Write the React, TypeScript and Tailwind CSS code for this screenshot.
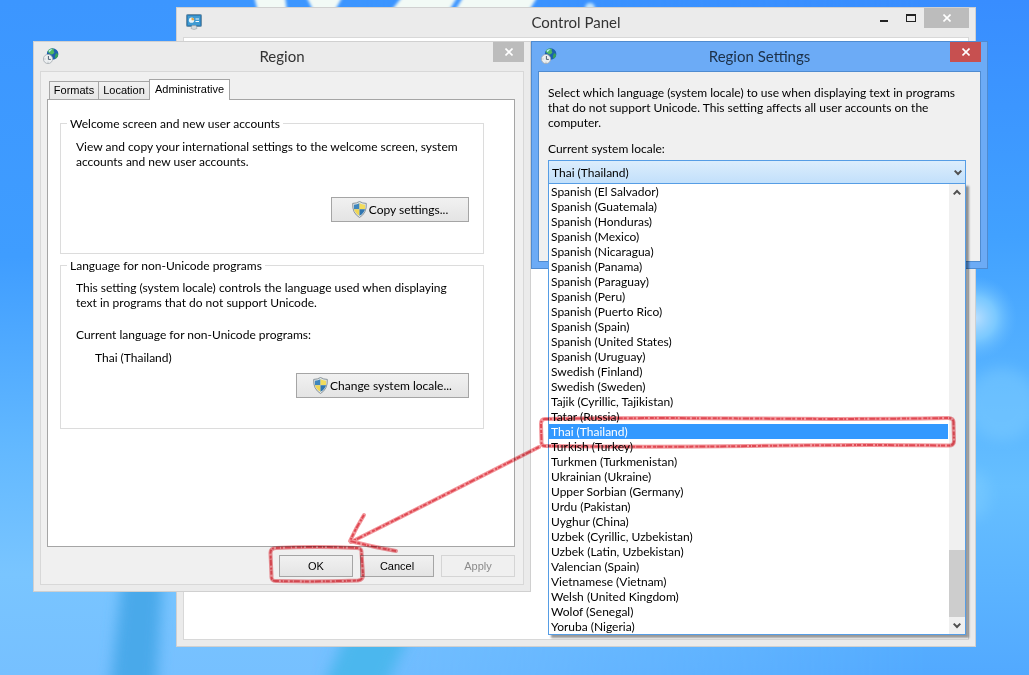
import { useState } from "react";
import type { ReactNode } from "react";

const locales = [
  "Spanish (El Salvador)",
  "Spanish (Guatemala)",
  "Spanish (Honduras)",
  "Spanish (Mexico)",
  "Spanish (Nicaragua)",
  "Spanish (Panama)",
  "Spanish (Paraguay)",
  "Spanish (Peru)",
  "Spanish (Puerto Rico)",
  "Spanish (Spain)",
  "Spanish (United States)",
  "Spanish (Uruguay)",
  "Swedish (Finland)",
  "Swedish (Sweden)",
  "Tajik (Cyrillic, Tajikistan)",
  "Tatar (Russia)",
  "Thai (Thailand)",
  "Turkish (Turkey)",
  "Turkmen (Turkmenistan)",
  "Ukrainian (Ukraine)",
  "Upper Sorbian (Germany)",
  "Urdu (Pakistan)",
  "Uyghur (China)",
  "Uzbek (Cyrillic, Uzbekistan)",
  "Uzbek (Latin, Uzbekistan)",
  "Valencian (Spain)",
  "Vietnamese (Vietnam)",
  "Welsh (United Kingdom)",
  "Wolof (Senegal)",
  "Yoruba (Nigeria)",
];

const tabs = [
  { name: "Formats", width: "w-[49px]" },
  { name: "Location", width: "w-[51px]" },
  { name: "Administrative", width: "w-[81px]" },
];

function Wallpaper() {
  return (
    <svg
      className="absolute inset-0 h-full w-full"
      viewBox="0 0 1029 675"
      preserveAspectRatio="none"
      aria-hidden="true"
    >
      <defs>
        <linearGradient id="sky" x1="0" y1="0" x2="0" y2="1">
          <stop offset="0" stopColor="#3c96ff" />
          <stop offset="0.38" stopColor="#3f9dff" />
          <stop offset="0.66" stopColor="#62b8ff" />
          <stop offset="0.85" stopColor="#79c5ff" />
          <stop offset="1" stopColor="#76c0ff" />
        </linearGradient>
        <linearGradient id="right" x1="0" y1="0" x2="0" y2="1">
          <stop offset="0" stopColor="#388dff" />
          <stop offset="0.35" stopColor="#41a1ff" />
          <stop offset="0.72" stopColor="#66bfff" />
          <stop offset="1" stopColor="#52a9ff" />
        </linearGradient>
        <linearGradient id="fade" x1="0" y1="0" x2="1" y2="0">
          <stop offset="0.3" stopColor="#fff" stopOpacity="0" />
          <stop offset="0.9" stopColor="#fff" />
        </linearGradient>
        <mask id="fadeMask">
          <rect width="1029" height="675" fill="url(#fade)" />
        </mask>
        <radialGradient id="glow">
          <stop offset="0" stopColor="#b8deff" />
          <stop offset="0.5" stopColor="#86d0ff" stopOpacity="0.8" />
          <stop offset="1" stopColor="#62b8ff" stopOpacity="0" />
        </radialGradient>
        <filter id="soft" x="-50%" y="-50%" width="200%" height="200%">
          <feGaussianBlur stdDeviation="7" />
        </filter>
        <filter id="edge" x="-50%" y="-50%" width="200%" height="200%">
          <feGaussianBlur stdDeviation="1.5" />
        </filter>
      </defs>
      <rect width="1029" height="675" fill="url(#sky)" />
      <rect width="1029" height="675" fill="url(#right)" mask="url(#fadeMask)" />
      <g filter="url(#soft)">
        <path d="M124 560H164L156 690H110Z" fill="#4aa9ea" />
        <path d="M348 630H412L384 690H322Z" fill="#4bb7ee" />
      </g>
      <g filter="url(#edge)" fill="#f2faf6">
        <path d="M254 -4H285L287 12H258Z" />
        <path d="M306 -4H343L334 12H314Z" />
        <path d="M403 -4H458L448 12H390Z" />
        <path d="M464 -4H538L528 12H454Z" />
        <circle cx="590" cy="8" r="5" fill="#bfe4ff" />
      </g>
      <circle cx="975" cy="318" r="42" fill="url(#glow)" />
      <circle cx="1002" cy="404" r="36" fill="#86d2ff" opacity="0.4" filter="url(#soft)" />
      <ellipse cx="975" cy="495" rx="14" ry="24" fill="#86d2ff" opacity="0.4" filter="url(#soft)" />
    </svg>
  );
}

function ControlPanelIcon() {
  return (
    <svg width="16" height="16" viewBox="0 0 16 16" aria-hidden="true">
      <rect x="0.5" y="0.5" width="15" height="12" rx="1" fill="#2f7fb8" stroke="#6f8fa5" />
      <rect x="2" y="2" width="12" height="9" fill="#3f9bd2" />
      <circle cx="5.5" cy="6.2" r="2.6" fill="#e8f4fb" />
      <path d="M5.5 6.2V3.6A2.6 2.6 0 0 1 8.1 6.2Z" fill="#e7a845" />
      <path d="M9.5 5H13M9.5 7.5H13" stroke="#f4fbff" strokeWidth="1" />
      <path d="M6 11.5H10L11 14.5Q8 16.5 5 14.5Z" fill="#d4dadd" stroke="#9ba4a9" strokeWidth="0.6" />
    </svg>
  );
}

function RegionIcon() {
  return (
    <svg width="16" height="16" viewBox="0 0 16 16" aria-hidden="true">
      <circle cx="9.6" cy="6" r="5.8" fill="#1d5fae" />
      <path d="M6 1.6Q9 -0.2 11 1.2Q10 3 11.5 4.2Q9.5 7.5 7.8 6.2Q5 5 4.6 3.6Z" fill="#4fb860" />
      <path d="M13 5.2Q15.4 5 15 8Q13.6 10.8 12.2 10.6Q11.4 7.6 13 5.2Z" fill="#36a05b" />
      <path d="M5.5 2.6Q7.5 0.8 9.5 1.2Q7.5 2.6 6.6 4.2Z" fill="#b6e8f5" />
      <circle cx="5" cy="11" r="4.6" fill="#eceff1" stroke="#a5abb0" strokeWidth="0.8" />
      <path d="M5.4 8V11.4H7.8" fill="none" stroke="#4e5f70" strokeWidth="1" />
      <path d="M1.6 11H2.4M5 13.8V14.6" stroke="#8a9299" strokeWidth="0.8" />
    </svg>
  );
}

function ShieldIcon() {
  return (
    <svg width="15" height="17" viewBox="0 0 15 17" aria-hidden="true">
      <path
        d="M7.5 0.5Q10.5 2.4 14.3 2.4Q15 12 7.5 16.5Q0 12 0.7 2.4Q4.5 2.4 7.5 0.5Z"
        fill="#dfe5e8"
        stroke="#808b92"
        strokeWidth="0.9"
      />
      <path d="M7.5 2.2V8.2H2Q1.8 6 2 3.7Q5 3.6 7.5 2.2Z" fill="#3f86bd" />
      <path d="M7.5 2.2V8.2H13Q13.2 6 13 3.7Q10 3.6 7.5 2.2Z" fill="#f2dc5c" />
      <path d="M7.5 8.2V14.8Q2.8 12 2 8.2Z" fill="#efd655" />
      <path d="M7.5 8.2V14.8Q12.2 12 13 8.2Z" fill="#2f75b0" />
    </svg>
  );
}

function CloseGlyph() {
  return (
    <svg width="8" height="8" viewBox="0 0 8 8" aria-hidden="true">
      <path d="M0.5 0.5L7.5 7.5M7.5 0.5L0.5 7.5" stroke="#fff" strokeWidth="1.6" />
    </svg>
  );
}

function Chevron({ up = false }: { up?: boolean }) {
  return (
    <svg width="8" height="7" viewBox="0 0 8 7" aria-hidden="true">
      <path
        d={up ? "M0.7 5.4L4 2L7.3 5.4" : "M0.7 1.6L4 5L7.3 1.6"}
        fill="none"
        stroke="#505050"
        strokeWidth="2"
      />
    </svg>
  );
}

function DialogButton({ children, disabled = false }: { children: ReactNode; disabled?: boolean }) {
  return (
    <button
      disabled={disabled}
      className="h-[22px] w-[74px] border border-[#a5a5a5] bg-linear-to-b from-[#f1f1f1] to-[#e4e4e4] font-[Liberation_Sans,sans-serif] text-[11px] leading-[15px] disabled:border-[#d5d5d5] disabled:bg-none disabled:text-[#8b8b8b]"
    >
      {children}
    </button>
  );
}

function ShieldButton({ children, width }: { children: ReactNode; width: string }) {
  return (
    <button
      className={`flex h-[25px] items-center justify-center gap-[2px] border border-[#a5a5a5] bg-linear-to-b from-[#f1f1f1] to-[#e4e4e4] ${width}`}
    >
      <ShieldIcon />
      {children}
    </button>
  );
}

function ControlPanelWindow() {
  return (
    <section className="absolute top-[7px] right-[53px] bottom-[28px] left-[176px] flex flex-col border border-[#d0d0d0] bg-[#ebebeb] px-[6px] pb-[6px]">
      <header className="grid h-[29px] grid-cols-[1fr_auto_1fr] items-start">
        <div className="pt-[6px] pl-[3px]">
          <ControlPanelIcon />
        </div>
        <h1 className="pt-[4px] text-[15px] leading-[20px] text-[#333]">Control Panel</h1>
        <div className="flex justify-end">
          <button aria-label="Minimize" className="flex h-5 w-[28px] justify-center pt-[12px]">
            <span className="h-[2px] w-2 bg-[#222]" />
          </button>
          <button aria-label="Maximize" className="flex h-5 w-[26px] justify-center pt-[6px]">
            <span className="h-2 w-[10px] border border-t-2 border-[#222]" />
          </button>
          <button aria-label="Close" className="flex h-5 w-[45px] items-center justify-center bg-[#bcbcbc]">
            <CloseGlyph />
          </button>
        </div>
      </header>
      <div className="flex-1 border border-[#d8d8d8] bg-white" />
    </section>
  );
}

function RegionWindow() {
  return (
    <section className="absolute top-[41px] left-[33px] w-[498px] border border-[#d0d0d0] bg-[#ebebeb] px-[6px] pb-[6px]">
      <header className="grid h-[29px] grid-cols-[1fr_auto_1fr] items-start">
        <div className="pt-[6px] pl-[3px]">
          <RegionIcon />
        </div>
        <h2 className="pt-[4px] text-[15px] leading-[20px] text-[#333]">Region</h2>
        <div className="flex justify-end">
          <button aria-label="Close" className="flex h-5 w-[31px] items-center justify-center bg-[#bcbcbc]">
            <CloseGlyph />
          </button>
        </div>
      </header>

      <div className="border border-[#d8d8d8] bg-[#f0f0f0] pt-[7px] pr-2 pb-[7px] pl-[6px]">
        <div
          role="tablist"
          className="flex h-[20px] items-end px-[2px] font-[Liberation_Sans,sans-serif] text-[11px]"
        >
          {tabs.map(({ name, width }) =>
            name === "Administrative" ? (
              <button
                key={name}
                role="tab"
                aria-selected="true"
                className={`relative -mb-px h-[21px] border border-b-0 border-[#a5a5a5] bg-white pb-[2px] leading-[15px] ${width}`}
              >
                {name}
              </button>
            ) : (
              <button
                key={name}
                role="tab"
                aria-selected="false"
                className={`h-[18px] border border-r-0 border-b-0 border-[#a5a5a5] bg-linear-to-b from-[#f1f1f1] to-[#e6e6e6] leading-[15px] ${width}`}
              >
                {name}
              </button>
            ),
          )}
        </div>

        <div role="tabpanel" className="h-[448px] border border-[#a5a5a5] bg-white pt-4 pr-[30px] pl-3">
          <fieldset className="h-[138px] border border-[#dcdcdc] px-[15px]">
            <legend className="-ml-[9px] px-[3px] leading-[15px]">Welcome screen and new user accounts</legend>
            <p className="pt-2 leading-[15px]">
              View and copy your international settings to the welcome screen, system
              <br />
              accounts and new user accounts.
            </p>
            <div className="mt-7 -mr-px flex justify-end">
              <ShieldButton width="w-[138px]">Copy settings...</ShieldButton>
            </div>
          </fieldset>

          <fieldset className="mt-1 h-[171px] border border-[#dcdcdc] px-[15px]">
            <legend className="-ml-[9px] px-[3px] leading-[15px]">Language for non-Unicode programs</legend>
            <p className="pt-[7px] leading-[15px]">
              This setting (system locale) controls the language used when displaying
              <br />
              text in programs that do not support Unicode.
            </p>
            <p className="pt-[17px] leading-[15px]">Current language for non-Unicode programs:</p>
            <p className="pt-2 pl-[19px] leading-[15px]">Thai (Thailand)</p>
            <div className="mt-2 -mr-px flex justify-end">
              <ShieldButton width="w-[173px]">Change system locale...</ShieldButton>
            </div>
          </fieldset>
        </div>

        <div className="flex justify-end gap-[7px] pt-2">
          <DialogButton>OK</DialogButton>
          <DialogButton>Cancel</DialogButton>
          <DialogButton disabled>Apply</DialogButton>
        </div>
      </div>
    </section>
  );
}

function RegionSettingsWindow() {
  const [locale, setLocale] = useState("Thai (Thailand)");

  return (
    <section className="absolute top-[41px] left-[531px] w-[457px] border border-[#4f8bd0] bg-[#6cabf6] px-[6px] pb-[6px]">
      <header className="grid h-[29px] grid-cols-[1fr_auto_1fr] items-start">
        <div className="pt-[6px] pl-[3px]">
          <RegionIcon />
        </div>
        <h2 className="pt-[4px] text-[15px] leading-[20px] text-[#1c3048]">Region Settings</h2>
        <div className="flex justify-end">
          <button aria-label="Close" className="flex h-5 w-[31px] items-center justify-center bg-[#c75050]">
            <CloseGlyph />
          </button>
        </div>
      </header>

      <div className="h-[191px] border border-[#4f8bd0] bg-[#f0f0f0] pt-[13px] pr-[14px] pl-[9px]">
        <p className="leading-[15px]">
          Select which language (system locale) to use when displaying text in programs
          <br />
          that do not support Unicode. This setting affects all user accounts on the
          <br />
          computer.
        </p>
        <label htmlFor="system-locale" className="block pt-[11px] leading-[15px]">
          Current system locale:
        </label>
        <div className="relative mt-1">
          <select
            id="system-locale"
            value={locale}
            onChange={(e) => setLocale(e.target.value)}
            className="block h-6 w-full appearance-none border border-[#569de5] bg-linear-to-b from-[#dcedfc] to-[#c2e0fb] pl-[3px] leading-[15px]"
          >
            {locales.map((name) => (
              <option key={name}>{name}</option>
            ))}
          </select>
          <span className="pointer-events-none absolute top-[9px] right-1">
            <Chevron />
          </span>

          {/* Open drop-down list */}
          <div className="absolute top-[23px] right-0 left-0 flex border border-[#569de5] bg-white shadow-[3px_3px_2px_rgba(0,0,0,0.4)]">
            <ul role="listbox" aria-label="Current system locale" className="flex-1">
              {locales.map((name) => (
                <li
                  key={name}
                  role="option"
                  aria-selected={name === locale}
                  onClick={() => setLocale(name)}
                  className={`h-[15px] pl-[2px] leading-[15px] ${
                    name === locale ? "bg-[#3399ff] text-white" : "text-black"
                  }`}
                >
                  {name}
                </li>
              ))}
            </ul>
            <div className="ml-px flex w-4 flex-col items-center bg-[#f0f0f0]">
              <span className="flex h-[17px] items-center">
                <Chevron up />
              </span>
              <span className="mt-auto h-[67px] w-full bg-[#cdcdcd]" />
              <span className="flex h-[17px] items-center">
                <Chevron />
              </span>
            </div>
          </div>
        </div>
      </div>
    </section>
  );
}

const markerPaths = [
  "M545 419Q640 417.500 750 418.500T948 418Q954 418 953.500 423L954 441Q954 446 948 445.500Q850 444.500 750 446T545 446Q541 446 541.500 441L541 424Q541 419 545 419Z",
  "M276 548Q316 546 357 548Q362 548 361.500 553L363 575Q363 580 358 580.500Q316 582 276 581Q271 581 271.500 576L270.500 553Q270.500 548 276 548Z",
  "M539 447Q445 495 351 542",
  "M364 515Q356 528 350 541Q373 547 396 551",
];

// Hand-drawn crayon marks over the desktop
function MarkerNotes() {
  return (
    <svg
      className="pointer-events-none absolute top-0 left-0 mix-blend-multiply"
      width="1029"
      height="675"
      viewBox="0 0 1029 675"
      fill="none"
      strokeLinecap="round"
      strokeLinejoin="round"
      aria-hidden="true"
    >
      {markerPaths.map((d) => (
        <g key={d}>
          <path d={d} stroke="#f3989d" strokeWidth="4" />
          <path
            d={d}
            stroke="#df4a54"
            strokeWidth="2"
            strokeLinecap="butt"
            strokeDasharray="4 1 2 2 6 1 3 2"
          />
        </g>
      ))}
    </svg>
  );
}

export default function App() {
  return (
    <main className="relative min-h-screen overflow-hidden bg-[#3c96ff] font-[Lato,sans-serif] text-[12px] text-black">
      <Wallpaper />
      <ControlPanelWindow />
      <RegionWindow />
      <RegionSettingsWindow />
      <MarkerNotes />
    </main>
  );
}
